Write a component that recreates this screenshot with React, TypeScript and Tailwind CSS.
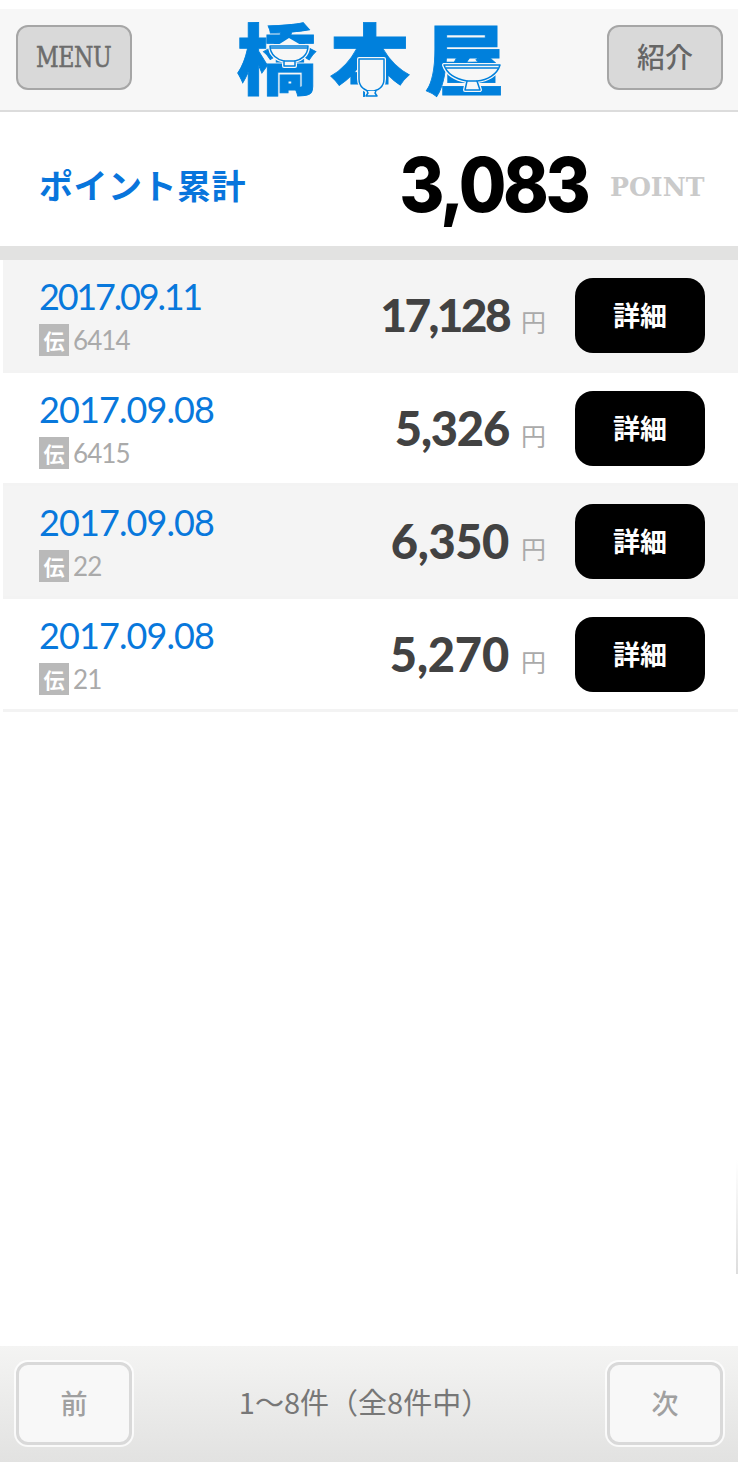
import React from 'react';
import { clsx } from 'clsx';

interface Slip {
  id: string;
  date: string;
  amount: string;
  dateClass?: string;
  amountClass?: string;
}

// Values with several 1s are set tighter
const slips: Slip[] = [
  {
    id: '6414',
    date: '2017.09.11',
    amount: '17,128',
    dateClass: 'tracking-[-2.2px]',
    amountClass: 'text-[46px] tracking-[-2.6px]',
  },
  { id: '6415', date: '2017.09.08', amount: '5,326' },
  { id: '22', date: '2017.09.08', amount: '6,350', amountClass: 'text-[47px] tracking-[-0.4px]' },
  { id: '21', date: '2017.09.08', amount: '5,270', amountClass: 'text-[47px] tracking-[-0.2px]' },
];

// 橋本屋 wordmark with the tableware drawings laid into each character
const Logo: React.FC = () => (
  <svg
    width="270"
    height="101"
    viewBox="0 0 270 101"
    className="block shrink-0 overflow-visible font-['Noto_Sans_CJK_JP',sans-serif] font-black"
  >
    <g fill="#0080dc" stroke="#0080dc" strokeWidth="0.8" fontSize="77" transform="scale(1.04 1)">
      <text x="1.5" y="80">橋</text>
      <text x="91" y="80">本</text>
      <text x="182" y="80">屋</text>
    </g>
    <g fill="#f7f7f7" stroke="#f7f7f7" strokeWidth="4" strokeLinejoin="round">
      <path d="M43 36L54 29L66 36Z" stroke="none" />
      <path d="M35 37H73C73 47 65 51 60 52V57H49V52C43 51 35 46 35 37Z" />
      <path d="M124 50H149V70C149 77 145 81 141 82V87H132V82C128 80 124 77 124 70Z" />
      <path d="M209 56H265C262 66 252 71 242 72L245 81H230L232 72C221 70 212 65 209 56Z" />
    </g>
    <g fill="#f7f7f7" stroke="#0080dc" strokeWidth="1.5" strokeLinejoin="round">
      {/* bowl */}
      <path d="M35 37H73C73 47 65 51 60 52V57H49V52C43 51 35 46 35 37Z" />
      <path d="M35 39H73M49 52H60" />
      {/* cup */}
      <path d="M124 50H149V70C149 78 143 82 136 82C130 82 124 78 124 70Z" />
      <path d="M132 82L133 84L131 87H142L140 84L141 82" />
      {/* footed dish */}
      <path d="M209 56H265C262 66 252 71 242 72L245 81H230L232 72C221 70 212 65 209 56Z" />
      <path d="M211 59H263M232 72H242" />
    </g>
  </svg>
);

const SlipRow: React.FC<{ slip: Slip; shaded: boolean }> = ({ slip, shaded }) => (
  <li
    className={clsx(
      'ml-[3px] flex h-[113px] border-b-[3px] border-[#f3f3f3] pl-9 pr-[33px]',
      shaded ? 'bg-[#f4f4f4]' : 'bg-white'
    )}
  >
    <div className="w-[220px] pt-[17px]">
      <p
        className={clsx(
          'font-[Lato,sans-serif] text-[36px] leading-[38px] text-[#0878dc]',
          slip.dateClass ?? 'tracking-[-0.9px]'
        )}
      >
        {slip.date}
      </p>
      <div className="mt-[9px] flex items-center gap-1">
        <span className="flex h-8 w-[30px] items-center justify-center bg-[#b9b9b9] font-['Noto_Sans_CJK_JP',sans-serif] text-[21px] font-bold leading-none text-white">
          伝
        </span>
        <span className="font-[Lato,sans-serif] text-[26px] leading-8 tracking-[-0.9px] text-[#aaaaaa]">{slip.id}</span>
      </div>
    </div>
    <div className="flex flex-1 items-baseline justify-end pt-[25px]">
      <span
        className={clsx(
          'font-[Lato,sans-serif] font-black leading-[60px] text-[#424242]',
          slip.amountClass ?? 'text-[47px] tracking-[-1.2px]'
        )}
      >
        {slip.amount}
      </span>
      <span className="ml-3 font-['Noto_Sans_CJK_JP',sans-serif] text-[25px] leading-none text-[#aaaaaa]">円</span>
    </div>
    <button className="ml-[29px] mt-[18px] h-[75px] w-[130px] rounded-[18px] bg-black font-['Noto_Sans_CJK_JP',sans-serif] text-[27px] font-bold text-white">
      詳細
    </button>
  </li>
);

export default function App() {
  return (
    <div className="flex h-[1462px] w-[738px] flex-col overflow-hidden bg-white pt-[9px] font-['Noto_Sans_CJK_JP',sans-serif]">
      <header className="flex h-[103px] shrink-0 items-start justify-between border-b-2 border-[#dcdcdc] bg-[#f7f7f7] px-4">
        <button className="mt-4 h-[65px] w-[116px] rounded-[12px] border-2 border-[#a6a6a6] bg-[#d9d9d9] font-['DejaVu_Serif',serif] text-[28px] text-[#6c6c6c]">
          <span className="-mx-4 inline-block scale-x-[0.79] tracking-[-0.5px] [-webkit-text-stroke:0.6px_#6c6c6c]">MENU</span>
        </button>
        <Logo />
        <button className="-mr-px mt-4 h-[65px] w-[116px] rounded-[12px] border-2 border-[#a6a6a6] bg-[#d9d9d9] pb-1 text-[28px] font-medium text-[#666666]">
          紹介
        </button>
      </header>

      <section className="flex h-[134px] shrink-0 items-center justify-between pl-[39px] pr-[34px]">
        <h1 className="pt-2.5 text-[34px] font-bold tracking-[0.5px] text-[#0875dc]">ポイント累計</h1>
        <div className="flex items-center">
          <span className="origin-right scale-x-[0.92] pt-2.5 font-[Inter,sans-serif] text-[75px] font-extrabold leading-none tracking-[-3.7px] text-black">
            3,083
          </span>
          <span className="ml-[19px] pt-4 font-['DejaVu_Serif',serif] text-[26px] font-bold text-[#cacaca]">
            <span className="inline-block origin-right scale-x-[0.97]">POINT</span>
          </span>
        </div>
      </section>

      <ul className="shrink-0 border-t-[14px] border-[#e2e2e1]">
        {slips.map((slip, i) => (
          <SlipRow key={slip.id} slip={slip} shaded={i % 2 === 0} />
        ))}
      </ul>

      <div className="flex flex-1 justify-end pt-[448px]">
        <div className="h-[114px] w-0.5 bg-linear-to-b from-white to-[#dddddd]" />
      </div>

      <footer className="flex h-[116px] shrink-0 items-start justify-between bg-linear-to-b from-[#f4f4f3] to-[#e2e2e1] px-4 pt-4 text-[27px]">
        <button className="h-[83px] w-[116px] rounded-[12px] border-[3px] border-[#d9d9d9] bg-[#f8f8f8] font-medium text-[#a0a0a0] ring-2 ring-white/80">
          前
        </button>
        <p className="-ml-2.5 mt-[19px] whitespace-nowrap text-[29px] leading-[40px] text-[#777777]">1～8件（全8件中）</p>
        <button className="-mr-px h-[83px] w-[116px] rounded-[12px] border-[3px] border-[#d9d9d9] bg-[#f8f8f8] font-medium text-[#a0a0a0] ring-2 ring-white/80">
          次
        </button>
      </footer>
    </div>
  );
}
